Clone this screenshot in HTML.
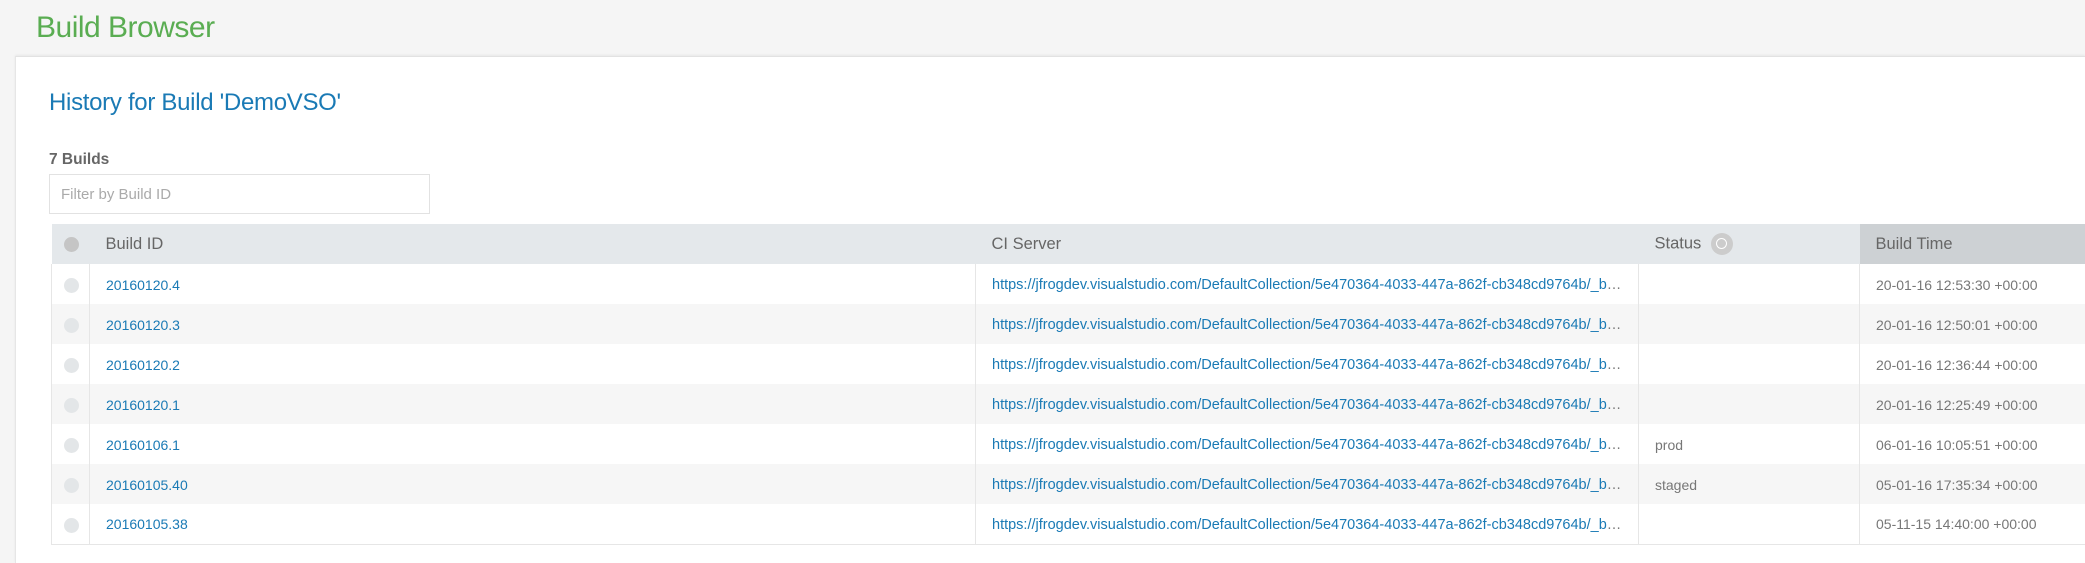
<!DOCTYPE html>
<html><head><meta charset="utf-8"><style>
*{box-sizing:border-box;margin:0;padding:0}
body{width:2085px;height:563px;overflow:hidden;background:#f5f5f5;font-family:"Liberation Sans",sans-serif;position:relative}
.title{position:absolute;left:36px;top:11px;font-size:30px;color:#5aad52;letter-spacing:-0.5px}
.panel{position:absolute;left:15px;top:56px;width:2070px;height:507px;background:#fff;border-top:1px solid #e2e2e2;border-left:1px solid #e6e6e6;box-shadow:0 -1px 2px rgba(0,0,0,0.06)}
.h2{position:absolute;left:49px;top:89px;font-size:24px;color:#1a7ab5;letter-spacing:-0.3px}
.cnt{position:absolute;left:49px;top:151px;font-size:15.5px;font-weight:bold;color:#666}
.inp{position:absolute;left:49px;top:174px;width:381px;height:40px;border:1px solid #e2e2e2;font-size:15px;color:#aaa;padding:11px 0 0 11px}
table{position:absolute;left:51px;top:224px;width:2034px;border-collapse:collapse;table-layout:fixed;font-size:14px}
th{height:40px;background:#e4e8eb;color:#666;font-weight:normal;text-align:left;font-size:16.5px;padding-left:16px}
td{height:40px;color:#777;padding-left:16px;border-left:1px solid #e6e6e6;white-space:nowrap;overflow:hidden;text-overflow:ellipsis;padding-top:1px}
td.url{font-size:14.5px;padding-right:10px;padding-top:2px}
tr:nth-child(even) td{background:#f6f6f6}
tbody tr:last-child td{border-bottom:1px solid #e6e6e6}
td.c{padding-left:0}
a{color:#1a7ab5;text-decoration:none}
.dot{display:inline-block;width:15px;height:15px;border-radius:50%;background:#e3e6e8;margin-left:12px;vertical-align:middle}
th .dot{background:#c5c5c5}
.bt{background:#cdd1d4!important}
.sic{display:inline-block;width:22px;height:22px;border-radius:50%;background:#ccc;vertical-align:middle;margin-left:10px;position:relative}
.sic:after{content:"";position:absolute;left:5px;top:5px;width:9px;height:9px;border:1.5px solid #fff;border-radius:50%}
</style></head><body>
<div class="title">Build Browser</div>
<div class="panel"></div>
<div class="h2">History for Build 'DemoVSO'</div>
<div class="cnt">7 Builds</div>
<div class="inp">Filter by Build ID</div>
<table>
<colgroup><col style="width:38px"><col style="width:886px"><col style="width:663px"><col style="width:221px"><col></colgroup>
<thead><tr><th style="padding:0"><span class="dot"></span></th><th>Build ID</th><th>CI Server</th><th>Status<span class="sic"></span></th><th class="bt">Build Time</th></tr></thead>
<tbody>
<tr><td class="c"><span class="dot"></span></td><td><a>20160120.4</a></td><td class="url"><a>https://jfrogdev.visualstudio.com/DefaultCollection/5e470364-4033-447a-862f-cb348cd9764b/_build</a></td><td></td><td>20-01-16 12:53:30 +00:00</td></tr>
<tr><td class="c"><span class="dot"></span></td><td><a>20160120.3</a></td><td class="url"><a>https://jfrogdev.visualstudio.com/DefaultCollection/5e470364-4033-447a-862f-cb348cd9764b/_build</a></td><td></td><td>20-01-16 12:50:01 +00:00</td></tr>
<tr><td class="c"><span class="dot"></span></td><td><a>20160120.2</a></td><td class="url"><a>https://jfrogdev.visualstudio.com/DefaultCollection/5e470364-4033-447a-862f-cb348cd9764b/_build</a></td><td></td><td>20-01-16 12:36:44 +00:00</td></tr>
<tr><td class="c"><span class="dot"></span></td><td><a>20160120.1</a></td><td class="url"><a>https://jfrogdev.visualstudio.com/DefaultCollection/5e470364-4033-447a-862f-cb348cd9764b/_build</a></td><td></td><td>20-01-16 12:25:49 +00:00</td></tr>
<tr><td class="c"><span class="dot"></span></td><td><a>20160106.1</a></td><td class="url"><a>https://jfrogdev.visualstudio.com/DefaultCollection/5e470364-4033-447a-862f-cb348cd9764b/_build</a></td><td>prod</td><td>06-01-16 10:05:51 +00:00</td></tr>
<tr><td class="c"><span class="dot"></span></td><td><a>20160105.40</a></td><td class="url"><a>https://jfrogdev.visualstudio.com/DefaultCollection/5e470364-4033-447a-862f-cb348cd9764b/_build</a></td><td>staged</td><td>05-01-16 17:35:34 +00:00</td></tr>
<tr><td class="c"><span class="dot"></span></td><td><a>20160105.38</a></td><td class="url"><a>https://jfrogdev.visualstudio.com/DefaultCollection/5e470364-4033-447a-862f-cb348cd9764b/_build</a></td><td></td><td>05-11-15 14:40:00 +00:00</td></tr>
</tbody></table>
</body></html>
